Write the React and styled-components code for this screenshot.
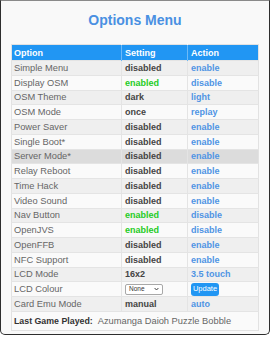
import React from 'react';
import styled, { createGlobalStyle } from 'styled-components';

const GlobalStyle = createGlobalStyle`
  body {
    margin: 0;
    background: #ffffff;
    font-family: "Liberation Sans", Arial, sans-serif;
  }
`;

const Panel = styled.div`
  width: 270px;
  height: 335px;
  box-sizing: border-box;
  border: 1.5px solid #2e2e2e;
  border-top: 1px solid #8a8a8a;
  border-radius: 0 0 5px 5px;
  background: #f9f9f9;
  padding-top: 11px;
`;

const Title = styled.h1`
  margin: 0 0 16px;
  font-size: 14px;
  line-height: 16px;
  font-weight: bold;
  color: #4a90e2;
  text-align: center;
`;

const Table = styled.table`
  width: 247px;
  margin: 0 auto;
  border-collapse: collapse;
  table-layout: fixed;
  border: 1px solid #e2e2e2;
  font-size: 9px;
`;

const HeadCell = styled.th`
  height: 15px;
  padding: 0 3px;
  background: #2196f3;
  color: #ffffff;
  font-weight: bold;
  text-align: left;
  border-left: 1px solid rgba(255, 255, 255, 0.35);

  &:first-child {
    border-left: none;
    padding-left: 2px;
  }
`;

const Row = styled.tr`
  background: ${({ $hover, $odd }) => ($hover ? '#dcdcdc' : $odd ? '#efefef' : '#fafafa')};
  border-top: 1px solid #e4e4e4;
`;

const Cell = styled.td`
  height: 14.75px;
  padding: 0 3px;
  box-sizing: border-box;
  border-left: 1px solid #e4e4e4;
  white-space: nowrap;
  line-height: 10px;
`;

const OptionCell = styled(Cell)`
  border-left: none;
  padding-left: 2px;
  color: #666666;
  font-size: 9.3px;
`;

const SettingCell = styled(Cell)`
  color: ${({ $on }) => ($on ? '#1fcc1f' : '#444444')};
  font-weight: bold;
`;

const ActionCell = styled(Cell)`
  color: #4f94e4;
  font-weight: bold;
`;

const Select = styled.span`
  display: inline-flex;
  align-items: center;
  justify-content: space-between;
  width: 38px;
  height: 11px;
  box-sizing: border-box;
  padding: 0 3px;
  border: 1px solid #a8a8a8;
  border-radius: 2px;
  background: #ffffff;
  color: #333333;
  font-size: 6.5px;
  font-weight: normal;
  vertical-align: middle;
`;

const UpdateButton = styled.span`
  display: inline-flex;
  align-items: center;
  justify-content: center;
  width: 28px;
  height: 13px;
  border-radius: 3px;
  background: #2196f3;
  color: #ffffff;
  font-size: 7.5px;
  font-weight: normal;
  vertical-align: middle;
`;

const LastRow = styled.tr`
  background: #fafafa;
  border-top: 1px solid #e4e4e4;
`;

const LastCell = styled.td`
  height: 18px;
  padding: 0 2px;
  white-space: nowrap;
`;

const LastLabel = styled.span`
  font-weight: bold;
  font-size: 8.8px;
  color: #333333;
  margin-right: 5px;
`;

const LastValue = styled.span`
  font-size: 9.3px;
  color: #666666;
`;

const rows = [
  ['Simple Menu', 'disabled', 'enable'],
  ['Display OSM', 'enabled', 'disable'],
  ['OSM Theme', 'dark', 'light'],
  ['OSM Mode', 'once', 'replay'],
  ['Power Saver', 'disabled', 'enable'],
  ['Single Boot*', 'disabled', 'enable'],
  ['Server Mode*', 'disabled', 'enable', true],
  ['Relay Reboot', 'disabled', 'enable'],
  ['Time Hack', 'disabled', 'enable'],
  ['Video Sound', 'disabled', 'enable'],
  ['Nav Button', 'enabled', 'disable'],
  ['OpenJVS', 'enabled', 'disable'],
  ['OpenFFB', 'disabled', 'enable'],
  ['NFC Support', 'disabled', 'enable'],
  ['LCD Mode', '16x2', '3.5 touch'],
  ['LCD Colour', 'select', 'update'],
  ['Card Emu Mode', 'manual', 'auto'],
];

const Chevron = () => (
  <svg width="5" height="4" viewBox="0 0 5 4">
    <path d="M0.6 1 L2.5 3 L4.4 1" fill="none" stroke="#333" strokeWidth="0.9" />
  </svg>
);

const App = () => (
  <>
    <GlobalStyle />
    <Panel>
      <Title>Options Menu</Title>
      <Table>
        <colgroup>
          <col style={{ width: 110 }} />
          <col style={{ width: 66 }} />
          <col style={{ width: 71 }} />
        </colgroup>
        <thead>
          <tr>
            <HeadCell>Option</HeadCell>
            <HeadCell>Setting</HeadCell>
            <HeadCell>Action</HeadCell>
          </tr>
        </thead>
        <tbody>
          {rows.map(([option, setting, action, hover], i) => (
            <Row key={option} $odd={i % 2 === 0} $hover={hover}>
              <OptionCell>{option}</OptionCell>
              <SettingCell $on={setting === 'enabled'}>
                {setting === 'select' ? (
                  <Select>
                    None <Chevron />
                  </Select>
                ) : (
                  setting
                )}
              </SettingCell>
              <ActionCell>
                {action === 'update' ? <UpdateButton>Update</UpdateButton> : action}
              </ActionCell>
            </Row>
          ))}
          <LastRow>
            <LastCell colSpan={3}>
              <LastLabel>Last Game Played:</LastLabel>
              <LastValue>Azumanga Daioh Puzzle Bobble</LastValue>
            </LastCell>
          </LastRow>
        </tbody>
      </Table>
    </Panel>
  </>
);

export default App;
